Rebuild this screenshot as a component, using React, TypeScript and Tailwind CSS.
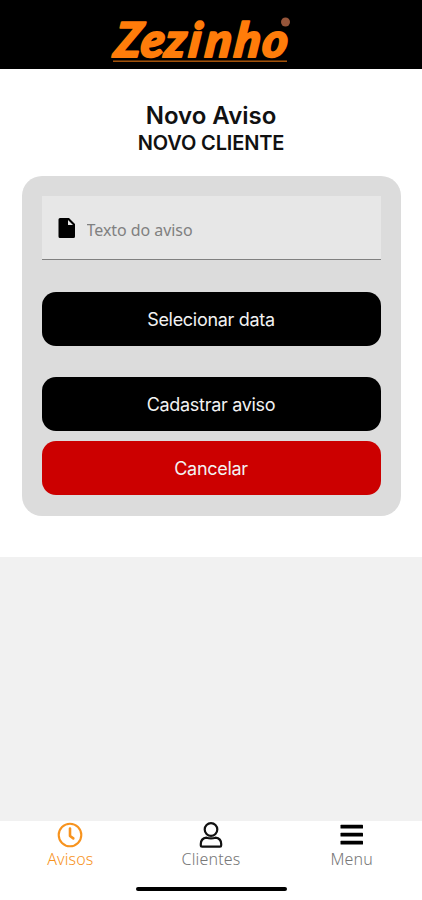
import { useState } from 'react';

function Logo() {
  return (
    <svg width="220" height="68" viewBox="0 0 220 68" aria-label="Zezinho">
      <text
        x="16 42.5 66.5 90.5 107 136 164"
        y="57.5"
        transform="translate(13 0) skewX(-7)"
        fontFamily="Lato, 'Liberation Sans', sans-serif"
        fontSize="48"
        fontWeight="900"
        fontStyle="italic"
        fill="#ff7c0a"
        stroke="#ff7c0a"
        strokeWidth="2"
        strokeLinejoin="round"
      >
        Zezinho
      </text>
      <rect x="22" y="60.5" width="174" height="1.4" fill="#b35a0c" />
      <circle cx="194.5" cy="22" r="4.5" fill="#96553a" />
    </svg>
  );
}

function FileIcon() {
  return (
    <svg width="18" height="20" viewBox="0 0 18 20" className="shrink-0">
      <path d="M2 0H11L17 6V18.5A1.5 1.5 0 0 1 15.5 20H2A1.5 1.5 0 0 1 .5 18.5V1.5A1.5 1.5 0 0 1 2 0Z" fill="#000" />
      <path d="M10 2V7H15Z" fill="#e7e7e7" />
    </svg>
  );
}

function ClockIcon() {
  return (
    <svg width="26" height="26" viewBox="0 0 26 26" fill="none" stroke="currentColor" strokeWidth="2.1">
      <circle cx="13" cy="13" r="11.3" />
      <path d="M13 6.5V14L16.3 16.4" strokeWidth="2.6" strokeLinecap="round" strokeLinejoin="round" />
    </svg>
  );
}

function UserIcon() {
  return (
    <svg width="26" height="26" viewBox="0 0 26 26" fill="none" stroke="#111" strokeWidth="2.2" strokeLinejoin="round">
      <circle cx="13" cy="7.5" r="6.3" />
      <path d="M8.5 15.7C5 16.2 2.8 18.8 2.8 22V23.2Q2.8 24.6 4.2 24.6H22Q23.2 24.6 23.2 23.2V22C23.2 18.8 21 16.2 17.5 15.7Q13 17.2 8.5 15.7Z" />
    </svg>
  );
}

function MenuIcon() {
  return (
    <svg width="26" height="26" viewBox="0 0 26 26" fill="#000">
      <rect x="1.5" y="2.8" width="22.5" height="3.8" rx="0.6" />
      <rect x="1.5" y="10.8" width="22.5" height="3.8" rx="0.6" />
      <rect x="1.5" y="18.8" width="22.5" height="3.8" rx="0.6" />
    </svg>
  );
}

const buttonClass =
  "h-[54px] w-full shrink-0 rounded-[14px] font-['Inter',sans-serif] pt-px text-[18px] tracking-[-0.3px] text-[#f2f2f2] flex items-center justify-center";

export default function App() {
  const [texto, setTexto] = useState('');

  return (
    <div className="flex h-[900px] w-full flex-col overflow-hidden bg-[#f1f1f1] font-['Inter',sans-serif]">
      {/* Header */}
      <header className="flex h-[69px] shrink-0 justify-center bg-black pr-[20px]">
        <Logo />
      </header>

      {/* Form */}
      <main className="h-[488px] shrink-0 bg-white px-[21.5px] pt-[32px]">
        <h1 className="text-center text-[24px] leading-[29px] font-semibold text-[#111]">Novo Aviso</h1>
        <h2 className="pt-px text-center text-[20px] leading-[25px] font-semibold tracking-[-0.15px] text-[#111]">
          NOVO CLIENTE
        </h2>

        <div className="mt-5 flex h-[340px] flex-col rounded-[20px] bg-[#dcdcdc] px-5 pt-5">
          <label className="flex h-[64px] w-full shrink-0 items-center border-b border-[#808080] bg-[#e7e7e7] pl-[16px]">
            <FileIcon />
            <input
              className="ml-[11px] h-8 min-w-0 flex-1 bg-transparent pt-[5px] font-['Noto_Sans',sans-serif] text-[16px] tracking-[-0.05px] outline-none placeholder:text-[#808080]"
              placeholder="Texto do aviso"
              value={texto}
              onChange={(e) => setTexto(e.target.value)}
            />
          </label>
          <button className={`${buttonClass} mt-[31.5px] bg-black`}>Selecionar data</button>
          <button className={`${buttonClass} mt-[31px] bg-black`}>Cadastrar aviso</button>
          <button className={`${buttonClass} mt-[10.5px] bg-[#cc0000]`}>Cancelar</button>
        </div>
      </main>

      {/* Bottom tabs */}
      <footer className="mt-auto flex h-[79px] shrink-0 flex-col items-center bg-white">
        <nav className="grid w-full grid-cols-3 pt-px font-['Noto_Sans',sans-serif] text-[16px] leading-[23px] font-light tracking-[0.15px] text-[#777]">
          <a href="#" className="flex flex-col items-center text-[#f7931e]" onClick={(e) => e.preventDefault()}>
            <ClockIcon />
            Avisos
          </a>
          <a href="#" className="flex flex-col items-center" onClick={(e) => e.preventDefault()}>
            <UserIcon />
            Clientes
          </a>
          <a href="#" className="flex flex-col items-center" onClick={(e) => e.preventDefault()}>
            <MenuIcon />
            Menu
          </a>
        </nav>
        <div className="mt-[16px] h-[4px] w-[151px] rounded-full bg-black" />
      </footer>
    </div>
  );
}
